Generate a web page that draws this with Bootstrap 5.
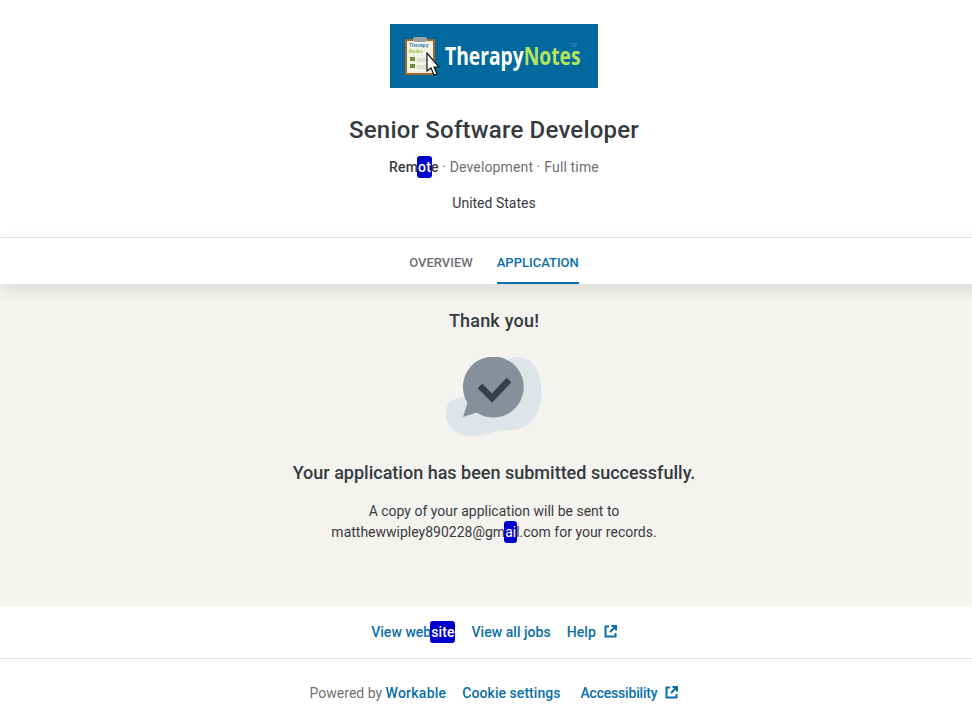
<!DOCTYPE html>
<html lang="en">
<head>
    <meta charset="UTF-8" />
    <meta name="viewport" content="width=device-width, initial-scale=1" />
    <title>Senior Software Developer</title>
    <link href="https://cdn.jsdelivr.net/npm/bootstrap@5.3.2/dist/css/bootstrap.min.css" rel="stylesheet" />
    <style>
        html { height: 100%; overflow: hidden; }
        body { width: 988px; height: 100%; font-family: Roboto, "Noto Sans", sans-serif; color: #3a3a3e; font-size: 14px; background: #fff; overflow: hidden; }
        .top-head { height: 237px; padding-top: 24px; }
        .brand-logo { display: block; width: 208px; height: 64px; }
        .job-title { font-size: 24px; font-weight: 500; line-height: 32px; margin: 26px 0 0; color: #353a40; letter-spacing: .2px; }
        .job-meta { font-size: 14px; line-height: 20px; margin-top: 11px; color: #6f6f73; letter-spacing: .15px; }
        .job-meta strong { font-weight: 500; color: #3a3a3e; }
        .job-place { font-size: 14px; line-height: 20px; margin-top: 16px; color: #3a3a3e; }
        .hl { background: #0000cc; color: #fff !important; border-radius: 3px; padding: 3px 1px; margin: 0 -1px; }
        .tab-bar { height: 47px; border-top: 1px solid #e6e6e6; gap: 24px; box-shadow: 0 6px 16px rgba(0,0,0,.1); position: relative; background: #fff; }
        .tab-link { font-size: 13px; font-weight: 500; line-height: 50px; height: 46px; color: #6f6f73; text-decoration: none; }
        .tab-link.on { color: #0a6fa8; border-bottom: 2px solid #0a6fa8; }
        .done-pane { height: 322px; background: #f4f3ef; padding-top: 25px; }
        .done-title { font-size: 18px; font-weight: 500; line-height: 24px; margin: 0; color: #353a40; letter-spacing: .2px; }
        .done-art { display: block; width: 96px; height: 80px; margin-top: 24px; }
        .done-msg { font-size: 18px; font-weight: 500; line-height: 24px; margin: 24px 0 0; color: #353a40; }
        .done-copy { font-size: 14px; line-height: 21px; margin-top: 16px; color: #3a3a3e; }
        .foot-one { height: 53px; border-bottom: 1px solid #e6e6e6; gap: 16px; }
        .foot-two { height: 69px; gap: 16px; color: #6f6f73; }
        .foot-link { font-weight: 500; color: #0a6fa8; text-decoration: none; font-size: 14px; letter-spacing: .05px; }
        .foot-wide { letter-spacing: .25px; }
        .foot-tight { letter-spacing: -.2px; margin-left: 4px; }
        .foot-nudge { margin-left: 1px; }
        .ext-icon { width: 13px; height: 13px; margin-left: 8px; vertical-align: -1px; }
    </style>
</head>
<body>
    <!-- Cabecera -->
    <header class="top-head d-flex flex-column align-items-center text-center">
        <svg class="brand-logo" viewBox="0 0 208 64" role="img" aria-label="TherapyNotes">
            <rect width="208" height="64" fill="#02699f"/>
            <rect x="15" y="15" width="30" height="36" rx="1" fill="#a5672a"/>
            <rect x="17" y="17" width="26" height="32" fill="#f4f2e4"/>
            <rect x="23" y="13" width="14" height="5" rx="2" fill="#9ba4a8"/>
            <text x="19" y="23" font-size="5" font-weight="700" fill="#2f7fb5" font-family="Liberation Sans, sans-serif">Therapy</text>
            <text x="19" y="29" font-size="5" font-weight="700" fill="#8cc63f" font-family="Liberation Sans, sans-serif">Notes</text>
            <rect x="20" y="33" width="5" height="4" fill="#6c8f3a"/>
            <rect x="20" y="40" width="5" height="4" fill="#6c8f3a"/>
            <path d="M27 35h10M27 37h10M27 42h10M27 44h10" stroke="#c8c8c0" stroke-width="1"/>
            <path d="M37 29v18l4-3 3 7 3-1-3-7h5z" fill="#fff" stroke="#111" stroke-width="1.2"/>
            <text transform="translate(55 41) scale(.77 1)" font-size="25" font-weight="700" fill="#fff" font-family="Open Sans, sans-serif">Therapy<tspan fill="#b5e35c">Notes</tspan><tspan font-size="5.500" font-weight="400" fill="#5a8fb0" dx="-12" dy="-18">TM</tspan></text>
        </svg>
        <h1 class="job-title">Senior Software Developer</h1>
        <div class="job-meta"><strong>Rem<span class="hl">ot</span>e</strong> · Development · Full time</div>
        <div class="job-place">United States</div>
    </header>

    <!-- Pestañas -->
    <nav class="tab-bar d-flex justify-content-center">
        <a class="tab-link" href="#">OVERVIEW</a>
        <a class="tab-link on" href="#">APPLICATION</a>
    </nav>

    <!-- Confirmación -->
    <main class="done-pane d-flex flex-column align-items-center text-center">
        <h2 class="done-title">Thank you!</h2>
        <svg class="done-art" viewBox="0 0 96 80">
            <path d="M72 0c14 0 23 14 23 31 1 16-4 29-11 35-7 6-14 8-22 7-12-1-20 5-33 6C12 80 1 72 0 58c0-9 3-14 7-15 7-3 20-4 30-14C48 19 56 0 72 0z" fill="#dfe4e9"/>
            <path d="M47 -.500a30.500 30.500 0 1 1-16.500 56L17 60l4.500-14A30.500 30.500 0 0 1 47 -.500z" fill="#878f9a"/>
            <path d="M34 29l12 12 17-18" fill="none" stroke="#343e4c" stroke-width="6.500"/>
        </svg>
        <h2 class="done-msg">Your application has been submitted successfully.</h2>
        <div class="done-copy">A copy of your application will be sent to<br />matthewwipley890228@gm<span class="hl">ai</span>l.com for your records.</div>
    </main>

    <!-- Pie -->
    <div class="foot-one d-flex justify-content-center align-items-center">
        <a class="foot-link" href="#">View web<span class="hl">site</span></a>
        <a class="foot-link foot-nudge" href="#">View all jobs</a>
        <a class="foot-link" href="#">Help<svg class="ext-icon" viewBox="0 0 13 13"><path d="M5 1.500H1.500v10h10V8M7.500 1h4.500v4.500M12 1L6 7" fill="none" stroke="currentColor" stroke-width="2"/></svg></a>
    </div>
    <div class="foot-two d-flex justify-content-center align-items-center">
        <span>Powered by <a class="foot-link foot-wide" href="#">Workable</a></span>
        <a class="foot-link" href="#">Cookie settings</a>
        <a class="foot-link foot-tight" href="#">Accessibility<svg class="ext-icon" viewBox="0 0 13 13"><path d="M5 1.500H1.500v10h10V8M7.500 1h4.500v4.500M12 1L6 7" fill="none" stroke="currentColor" stroke-width="2"/></svg></a>
    </div>
    <script src="https://cdn.jsdelivr.net/npm/bootstrap@5.3.2/dist/js/bootstrap.bundle.min.js"></script>
</body>
</html>
